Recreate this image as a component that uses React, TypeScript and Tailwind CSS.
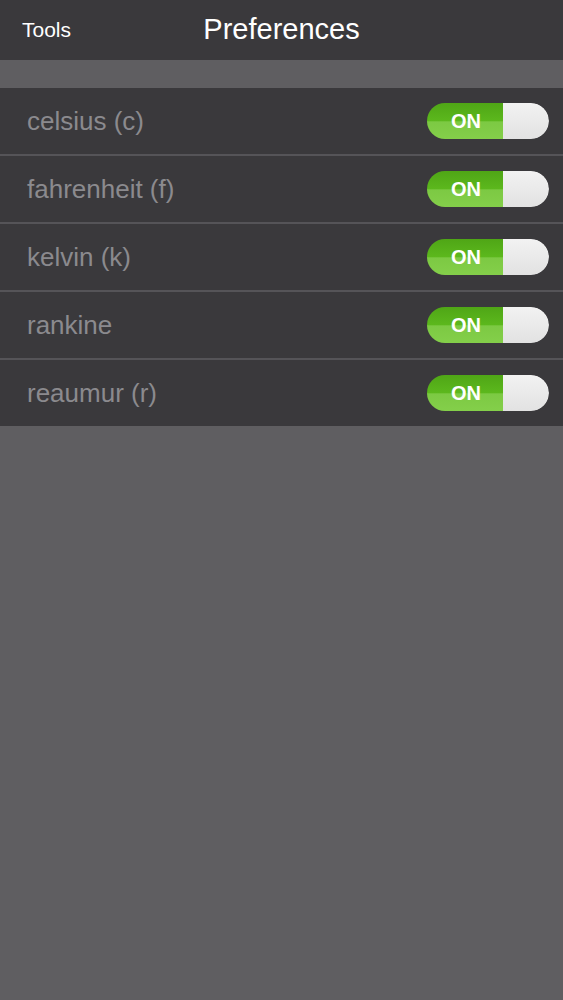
const units = ['celsius (c)', 'fahrenheit (f)', 'kelvin (k)', 'rankine', 'reaumur (r)']

const Toggle = () => (
  <div className="flex h-[36px] w-[122px] overflow-hidden rounded-full">
    <div className="relative flex w-[76px] items-center justify-center bg-[linear-gradient(to_bottom,#4fa616_0%,#5cb81d_50%,#7cc943_52%,#84cf4a_100%)]">
      <span className="pl-[2px] text-[20px] font-bold text-white">ON</span>
    </div>
    <div className="flex-1 rounded-r-full bg-[linear-gradient(to_bottom,#f2f2f2,#e2e2e2)]" />
  </div>
)

const App = () => {
  return (
    <div className="min-h-[1000px] bg-[#5f5e61] font-['Liberation_Sans',Arial,sans-serif]">
      <header className="relative flex h-[60px] items-center bg-[#3a393c]">
        <span className="pl-[22px] text-[21px] text-white">Tools</span>
        <h1 className="absolute left-0 right-0 text-center text-[29px] text-white pointer-events-none">
          Preferences
        </h1>
      </header>

      <div className="h-[28px]" />

      <ul className="bg-[#3a393c]">
        {units.map((unit, i) => (
          <li
            key={unit}
            className={`flex h-[66px] items-center justify-between pl-[27px] pr-[14px] ${
              i < units.length - 1 ? 'box-content border-b-2 border-[#555458]' : ''
            }`}
          >
            <span className="text-[26px] text-[#8b8a8e]">{unit}</span>
            <Toggle />
          </li>
        ))}
      </ul>
    </div>
  )
}

export default App
